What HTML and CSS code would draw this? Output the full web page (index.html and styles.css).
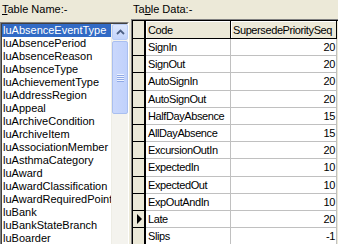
FILE: index.html
```html
<!DOCTYPE html>
<html lang="en">
<head>
  <meta charset="UTF-8">
  <link rel="stylesheet" href="styles.css">
</head>
<body>
  <div class="window">
    <!-- left: table list -->
    <div class="pane-list">
      <div class="label"><u>T</u>able Name:-</div>
      <div class="listbox">
        <div class="listbox-inner">
          <ul class="items">
            <li class="selected">luAbsenceEventType</li>
            <li>luAbsencePeriod</li>
            <li>luAbsenceReason</li>
            <li>luAbsenceType</li>
            <li>luAchievementType</li>
            <li>luAddressRegion</li>
            <li>luAppeal</li>
            <li>luArchiveCondition</li>
            <li>luArchiveItem</li>
            <li>luAssociationMember</li>
            <li>luAsthmaCategory</li>
            <li>luAward</li>
            <li>luAwardClassification</li>
            <li>luAwardRequiredPoint</li>
            <li>luBank</li>
            <li>luBankStateBranch</li>
            <li>luBoarder</li>
          </ul>
          <div class="vscroll">
            <div class="sb-btn">
              <svg width="9" height="6" viewBox="0 0 9 6"><path d="M1 5 L4.5 1.5 L8 5" fill="none" stroke="#4d6185" stroke-width="1.8"/></svg>
            </div>
            <div class="sb-thumb">
              <span class="grip"></span><span class="grip"></span><span class="grip"></span><span class="grip"></span>
            </div>
            <div class="sb-track"></div>
          </div>
        </div>
      </div>
    </div>

    <!-- right: table data grid -->
    <div class="pane-grid">
      <div class="label">Ta<u>b</u>le Data:-</div>
      <div class="grid">
        <div class="grid-inner">
          <table class="data">
            <colgroup><col class="c-sel"><col class="c-code"><col class="c-seq"></colgroup>
            <thead>
              <tr><th class="sel"></th><th>Code</th><th>SupersedePrioritySeq</th></tr>
            </thead>
            <tbody>
              <tr><td class="sel"></td><td>SignIn</td><td class="num">20</td></tr>
              <tr><td class="sel"></td><td>SignOut</td><td class="num">20</td></tr>
              <tr><td class="sel"></td><td>AutoSignIn</td><td class="num">20</td></tr>
              <tr><td class="sel"></td><td>AutoSignOut</td><td class="num">20</td></tr>
              <tr><td class="sel"></td><td>HalfDayAbsence</td><td class="num">15</td></tr>
              <tr><td class="sel"></td><td>AllDayAbsence</td><td class="num">15</td></tr>
              <tr><td class="sel"></td><td>ExcursionOutIn</td><td class="num">20</td></tr>
              <tr><td class="sel"></td><td>ExpectedIn</td><td class="num">10</td></tr>
              <tr><td class="sel"></td><td>ExpectedOut</td><td class="num">10</td></tr>
              <tr><td class="sel"></td><td>ExpOutAndIn</td><td class="num">10</td></tr>
              <tr><td class="sel"><span class="current"></span></td><td>Late</td><td class="num">20</td></tr>
              <tr><td class="sel"></td><td>Slips</td><td class="num">-1</td></tr>
            </tbody>
          </table>
        </div>
      </div>
    </div>
  </div>
</body>
</html>
```

FILE: styles.css
```css
/* page */
html, body {
  margin: 0;
  padding: 0;
}
body {
  width: 338px;
  height: 244px;
  overflow: hidden;
  background: #ece9d8;
  font-family: "Liberation Sans", Arial, sans-serif;
  font-size: 11px;
  color: #000;
}

.window {
  display: flex;
  align-items: flex-start;
}

.label {
  line-height: 13px;
  white-space: nowrap;
}

/* left pane */
.pane-list {
  width: 129px;
  flex: none;
}
.pane-list .label {
  height: 19px;
  padding: 3px 0 0 2px;
}

/* sunken listbox border */
.listbox {
  border-top: 1px solid #808080;
  border-left: 1px solid #808080;
  border-right: 1px solid #fff;
  height: 230px;
}
.listbox-inner {
  display: flex;
  height: 100%;
  border-top: 1px solid #404040;
  border-left: 1px solid #404040;
  border-right: 1px solid #d4d0c8;
  background: #fff;
}

.items {
  list-style: none;
  margin: 0;
  padding: 0;
  width: 109px;
  flex: none;
}
.items li {
  height: 13px;
  line-height: 13px;
  padding-left: 1px;
  white-space: nowrap;
  overflow: hidden;
}
.items li.selected {
  background: #316ac5;
  color: #fff;
}

/* xp style scrollbar */
.vscroll {
  width: 16px;
  flex: none;
  display: flex;
  flex-direction: column;
  background: #f4f3ee;
  border-left: 1px solid #eeede5;
}
.sb-btn {
  height: 14px;
  margin: 0 0 1px 0;
  border: 1px solid #b9cdf6;
  border-radius: 2px;
  background: linear-gradient(to bottom, #dde7fd, #c3d4fb);
  display: flex;
  align-items: center;
  justify-content: center;
}
.sb-thumb {
  height: 71px;
  border: 1px solid #a9bff0;
  border-radius: 2px;
  background: linear-gradient(to right, #cad8fc, #c0d1fb);
  display: flex;
  flex-direction: column;
  align-items: center;
  justify-content: center;
  gap: 1px;
}
.grip {
  width: 7px;
  height: 1px;
  background: #eef3fe;
  border-bottom: 1px solid #8fa9e6;
  margin-bottom: -1px;
}
.sb-track {
  flex: 1;
}

/* right pane */
.pane-grid {
  margin-left: 2px;
  flex: 1;
}
.pane-grid .label {
  height: 16px;
  padding: 3px 0 0 2px;
}

.grid {
  border-top: 1px solid #808080;
  border-left: 1px solid #808080;
  height: 230px;
}
.grid-inner {
  border-top: 1px solid #000;
  border-left: 1px solid #000;
  height: 100%;
  background: #ece9d8;
}

table.data {
  border-collapse: separate;
  border-spacing: 0;
  table-layout: fixed;
  width: 204px;
  letter-spacing: -0.4px;
}
col.c-sel { width: 13px; }
col.c-code { width: 85px; }
col.c-seq { width: 106px; }

.data th, .data td {
  height: 16.2px;
  padding: 0 2px;
  line-height: 16px;
  white-space: nowrap;
  overflow: hidden;
  font-weight: normal;
  text-align: left;
}
.data th {
  height: 17px;
  background: #ece9d8;
  border-right: 1px solid #000;
  border-bottom: 1px solid #000;
  box-shadow: inset 1px 1px 0 #fff;
}
.data td {
  background: #fff;
  border-right: 1px solid #c0c0c0;
  border-bottom: 1px solid #c0c0c0;
}
.data td.num {
  text-align: right;
  padding-right: 1px;
}
.data .sel {
  background: #ece9d8;
  border-right: 2px solid #000;
  border-bottom: 1px solid #000;
  padding: 0;
  box-shadow: none;
}

/* current row marker */
.current {
  display: block;
  width: 0;
  height: 0;
  margin-left: 4px;
  border-left: 5px solid #000;
  border-top: 5px solid transparent;
  border-bottom: 5px solid transparent;
}
```
